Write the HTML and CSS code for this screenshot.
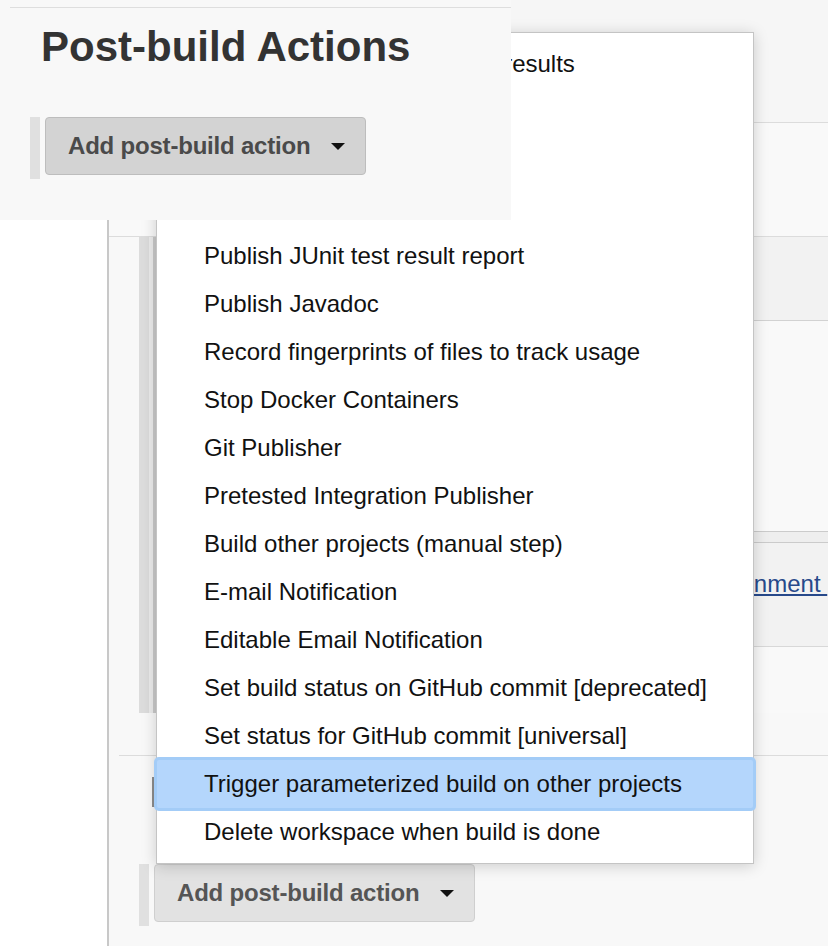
FILE: index.html
```html
<!DOCTYPE html>
<html lang="en">
<head>
<meta charset="utf-8">
<title>Post-build Actions</title>
<link rel="stylesheet" href="styles.css">
</head>
<body>
<div class="page">
  <aside class="side"></aside>
  <main class="main">
    <div class="sec sec-top"></div>
    <div class="sec sec-a"></div>
    <div class="chunk">
      <div class="chunk-inner">
        <div class="band b1"></div>
        <div class="band b2"></div>
        <div class="band b3"></div>
        <div class="band b4"><a class="env-link" href="#">See the list of available environment&nbsp;</a></div>
        <div class="band b5"></div>
      </div>
    </div>
    <div class="sep"></div>
    <div class="marker"></div>
    <div class="action-row bottom-row">
      <button class="add-btn add-btn--faded" type="button">Add post-build action<span class="caret"></span></button>
    </div>
  </main>
</div>

<ul class="menu">
  <li>Aggregate downstream test results</li>
  <li>Build other projects</li>
  <li>Publish HTML reports</li>
  <li>Archive the artifacts</li>
  <li>Publish JUnit test result report</li>
  <li>Publish Javadoc</li>
  <li>Record fingerprints of files to track usage</li>
  <li>Stop Docker Containers</li>
  <li>Git Publisher</li>
  <li>Pretested Integration Publisher</li>
  <li>Build other projects (manual step)</li>
  <li>E-mail Notification</li>
  <li>Editable Email Notification</li>
  <li>Set build status on GitHub commit [deprecated]</li>
  <li>Set status for GitHub commit [universal]</li>
  <li class="active">Trigger parameterized build on other projects</li>
  <li>Delete workspace when build is done</li>
</ul>

<div class="inset">
  <div class="inset-rule"></div>
  <h2 class="inset-title">Post-build Actions</h2>
  <div class="action-row">
    <button class="add-btn" type="button">Add post-build action<span class="caret"></span></button>
  </div>
</div>
</body>
</html>
```

FILE: styles.css
```css
* { box-sizing: border-box; }
html, body { margin: 0; padding: 0; }
body {
  font-family: "Liberation Sans", Arial, Helvetica, sans-serif;
  background: #fff;
  width: 828px;
  height: 946px;
  overflow: hidden;
  position: relative;
}

.page { display: flex; min-height: 946px; }
.side { width: 107px; flex: none; background: #fff; }
.main {
  flex: 1;
  min-width: 0;
  overflow: hidden;
  border-left: 2px solid #c8c8c8;
  background: #f8f8f8;
}

.sec-top { height: 123px; background: #f6f6f6; border-bottom: 1px solid #dcdcdc; }
.sec-a { height: 114px; background: #f9f9f9; border-bottom: 1px solid #dcdcdc; }

.chunk {
  margin-left: 30px;
  border-left: 10px solid #dcdcdc;
  background: #ebebeb;
}
.chunk-inner { margin-left: 4px; border-left: 3px solid #c9c9c9; }
.band { border-bottom: 1px solid #d2d2d2; }
.b1 { height: 84px; background: #f2f2f2; }
.b2 { height: 211px; background: #f9f9f9; border-bottom-color: #cbcbcb; }
.b3 { height: 11px; background: #eeeeee; border-bottom-color: #cbcbcb; }
.b4 {
  height: 104px;
  background: #f2f2f2;
  border-bottom-color: #d8d8d8;
  display: flex;
  align-items: flex-start;
  padding: 27px 0 0 279px;
  overflow: hidden;
}
.b5 { height: 66px; background: #f9f9f9; border-bottom: none; }

.env-link {
  flex: none;
  font-size: 24px;
  line-height: 28px;
  color: #27498a;
  text-decoration: underline;
  white-space: nowrap;
}

.sep { height: 43px; margin-left: 10px; border-bottom: 1px solid #dcdcdc; }
.marker { width: 3px; height: 30px; margin: 21px 0 0 43px; background: #8c8c8c; }

.action-row {
  display: flex;
  align-items: flex-start;
  margin-left: 30px;
  border-left: 10px solid #e0e0e0;
  height: 62px;
}
.bottom-row { margin-top: 57px; }

.add-btn {
  margin: 0 0 0 5px;
  height: 58px;
  display: inline-flex;
  align-items: center;
  gap: 21px;
  padding: 0 20px 0 22px;
  font-family: "Liberation Sans", Arial, Helvetica, sans-serif;
  font-weight: bold;
  font-size: 24px;
  letter-spacing: -0.2px;
  color: #4a4a4a;
  background: #d3d3d3;
  border: 1px solid #bdbdbd;
  border-radius: 4px;
  white-space: nowrap;
}
.add-btn--faded { background: #e2e2e2; border-color: #cfcfcf; color: #555; }
.caret {
  width: 0;
  height: 0;
  border-left: 7px solid transparent;
  border-right: 7px solid transparent;
  border-top: 7px solid #111;
}

.menu {
  position: absolute;
  left: 156px;
  top: 32px;
  width: 598px;
  margin: 0;
  padding: 7px 0;
  list-style: none;
  background: #fff;
  border: 1px solid #c4c4c4;
  box-shadow: 0 2px 14px rgba(0, 0, 0, 0.18);
}
.menu li {
  height: 48px;
  line-height: 48px;
  padding-left: 47px;
  font-size: 24px;
  color: #111;
  white-space: nowrap;
}
.menu li.active {
  background: #b4d6fc;
  box-shadow: 0 0 0 3px #a3ccf7;
  border-radius: 2px;
}

.inset {
  position: absolute;
  left: 0;
  top: 0;
  width: 511px;
  height: 220px;
  background: #f8f8f8;
}
.inset-rule { margin: 7px 0 0 10px; border-top: 1px solid #dedede; }
.inset-title {
  margin: 18px 0 0 41px;
  font-size: 42px;
  line-height: 42px;
  font-weight: bold;
  color: #333;
}
.inset .action-row { margin-top: 49px; }
```
